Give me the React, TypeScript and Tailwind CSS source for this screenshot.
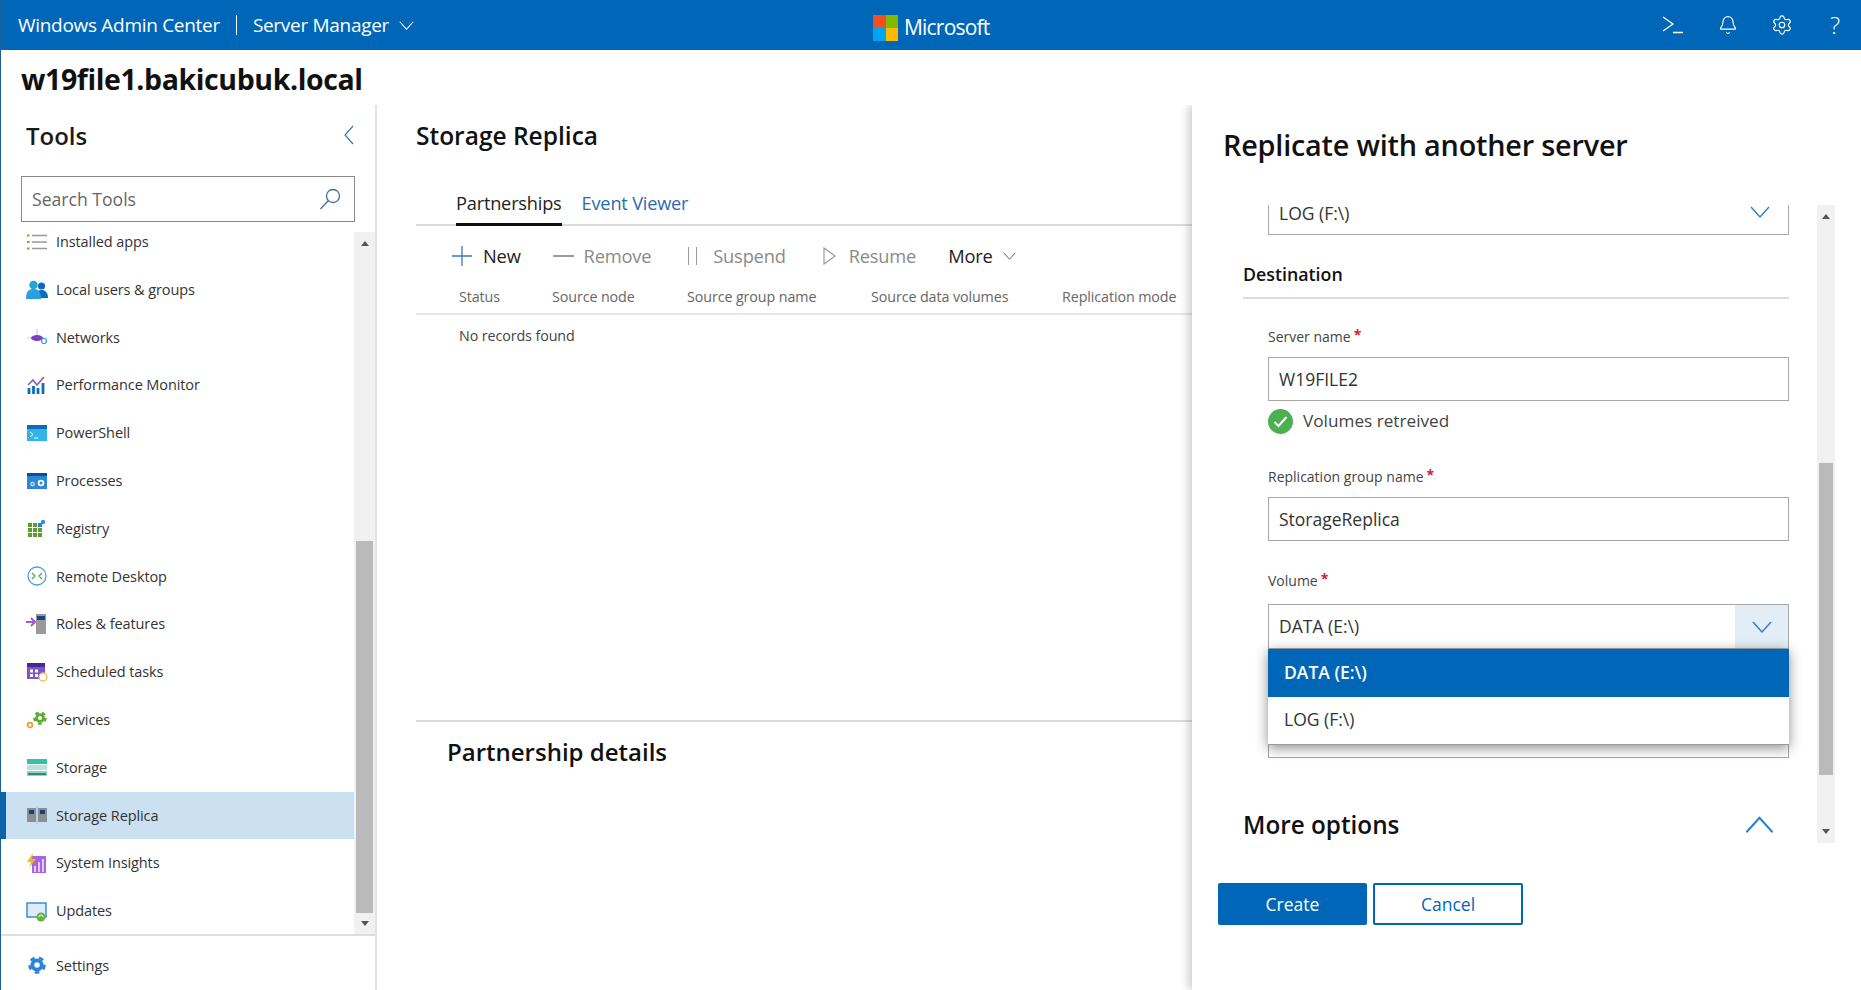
import { ReactNode } from "react"
import { Bell, Settings } from "lucide-react"

const Chevron = ({ className, up }: { className: string; up?: boolean }) => (
  <svg viewBox="0 0 20 12" className={className} fill="none" stroke="currentColor" strokeWidth="1.4">
    <path d={up ? "M1 11 10 1l9 10" : "M1 1l9 10 9-10"} />
  </svg>
)

const Gear = ({ color, r = 7, cx = 11, cy = 10 }: { color: string; r?: number; cx?: number; cy?: number }) => (
  <g fill="none" stroke={color}>
    <circle cx={cx} cy={cy} r={r} strokeWidth={2.6} strokeDasharray={`${r * 0.62} ${r * 0.62}`} />
    <circle cx={cx} cy={cy} r={r * 0.62} strokeWidth={r * 0.5} />
  </g>
)

const icons: Record<string, ReactNode> = {
  apps: (
    <>
      <path d="M1 3.500h2.500M1 10h2.500M1 16.500h2.500" stroke="#6fae3c" strokeWidth="2" />
      <path d="M6 3.500h15M6 10h15M6 16.500h15" stroke="#999" strokeWidth="1.400" />
    </>
  ),
  users: (
    <>
      <circle cx="15.500" cy="6" r="3.600" fill="#0f6cbd" />
      <path d="M10 18c0-7 3-8 5.500-8s6.500 1 6.500 8z" fill="#0f6cbd" />
      <circle cx="7.500" cy="5" r="4.200" fill="#2aa0dc" />
      <path d="M0 19c0-8 3-10 7.500-10S15 11 15 19z" fill="#2aa0dc" />
    </>
  ),
  networks: (
    <>
      <path d="M11 2v7" stroke="#c9b8ea" strokeWidth="1" />
      <path d="M1 11h20" stroke="#d7c9f2" strokeWidth="1" />
      <ellipse cx="11" cy="11" rx="6" ry="3" fill="#7b3fc4" />
      <circle cx="18" cy="14" r="2.500" fill="#fff" stroke="#3aa0dc" strokeWidth="1.2" />
    </>
  ),
  perf: (
    <>
      <path d="M3 19v-6M7.500 19v-8M12 19v-6M17 19V8" stroke="#0f6cbd" strokeWidth="2.800" />
      <path d="M2 10l5-5 4 5 7-8" fill="none" stroke="#8a5cc8" strokeWidth="1.600" />
    </>
  ),
  powershell: (
    <>
      <rect x="1" y="2" width="20" height="16" fill="#2fb5e8" />
      <rect x="1" y="2" width="20" height="4" fill="#0f6cbd" />
      <path d="M4 9l3 2.500-3 2.500M8 15h4" fill="none" stroke="#fff" strokeWidth="1" />
    </>
  ),
  processes: (
    <>
      <rect x="1" y="2" width="20" height="16" fill="#2e86d8" />
      <rect x="1" y="2" width="20" height="3" fill="#0d4f94" />
      <circle cx="6.500" cy="13" r="1.700" fill="none" stroke="#cfe6fa" strokeWidth="1.200" />
      <circle cx="15" cy="12" r="2.400" fill="none" stroke="#fff" strokeWidth="1.800" />
    </>
  ),
  registry: (
    <>
      <path d="M2 4h4v4H2zM7 4h4v4H7zM2 9h4v4H2zM7 9h4v4H7zM12 9h4v4h-4zM2 14h4v4H2zM7 14h4v4H7zM12 14h4v4h-4z" fill="#5b9e2e" />
      <path d="M12 4h4v4h-4z" fill="#2f7fc9" />
      <circle cx="17" cy="3" r="2.200" fill="#2f8fdc" />
    </>
  ),
  remote: (
    <>
      <circle cx="11" cy="10" r="9" fill="#fff" stroke="#4d9fdc" strokeWidth="1.300" />
      <path d="M6 7l3 3-3 3M16 7l-3 3 3 3" fill="none" stroke="#4fa35a" strokeWidth="1.200" />
    </>
  ),
  roles: (
    <>
      <rect x="10" y="0" width="10" height="20" fill="#9a9a9a" />
      <rect x="11" y="2" width="8" height="4" fill="#12497f" />
      <path d="M0 8h9M5 4l4 4-4 4" fill="none" stroke="#9a5bdc" strokeWidth="2" />
    </>
  ),
  tasks: (
    <>
      <rect x="1" y="1" width="18" height="16" fill="#7b55c9" />
      <rect x="1" y="1" width="18" height="4" fill="#47298f" />
      <path d="M4 7.500h3v3H4zM9 7.500h3v3H9zM4 12h3v3H4zM9 12h3v3H9z" fill="#fff" />
      <circle cx="17" cy="15" r="4" fill="#fff" stroke="#e7c048" strokeWidth="1.300" />
    </>
  ),
  services: (
    <>
      <Gear color="#5fae2e" r={5.500} cx={14} cy={8} />
      <circle cx="4" cy="15" r="2.400" fill="#fff" stroke="#eaa02a" strokeWidth="1.800" />
    </>
  ),
  storage: (
    <>
      <rect x="1" y="1" width="20" height="5" fill="#35c2a8" />
      <rect x="1" y="7" width="20" height="5" fill="#b8e3da" />
      <rect x="1" y="13" width="20" height="5" fill="#9ccfc3" />
      <rect x="2" y="15" width="18" height="2" fill="#2f8a80" />
    </>
  ),
  replica: (
    <>
      <rect x="1" y="3" width="9" height="14" fill="#8a8f96" />
      <rect x="12" y="3" width="9" height="14" fill="#8a8f96" />
      <rect x="3" y="5" width="5" height="4" fill="#17426f" />
      <rect x="14" y="5" width="5" height="4" fill="#17426f" />
      <path d="M11 1v18" stroke="#9cc2e2" strokeWidth="1" />
    </>
  ),
  insights: (
    <>
      <rect x="6" y="3" width="14" height="17" fill="#a566e0" />
      <path d="M9 19v-6M13 19V9M17 19V6" stroke="#e9d8fa" strokeWidth="1.800" />
      <path d="M7 0L1 9h4l-2 6 7-9H6z" fill="#f2b61f" />
    </>
  ),
  updates: (
    <>
      <rect x="1" y="2" width="19" height="14" fill="#dcecf8" stroke="#2f86d0" strokeWidth="1.400" />
      <circle cx="15" cy="16" r="4.500" fill="#66b53a" />
      <path d="M13 16a2 2 0 0 1 4 0" fill="none" stroke="#fff" strokeWidth="1" />
    </>
  ),
  settings: <Gear color="#2a84d8" r={7.500} cx={11} cy={9} />,
}

const tools = [
  { label: "Installed apps", icon: "apps" },
  { label: "Local users & groups", icon: "users" },
  { label: "Networks", icon: "networks" },
  { label: "Performance Monitor", icon: "perf" },
  { label: "PowerShell", icon: "powershell" },
  { label: "Processes", icon: "processes" },
  { label: "Registry", icon: "registry" },
  { label: "Remote Desktop", icon: "remote" },
  { label: "Roles & features", icon: "roles" },
  { label: "Scheduled tasks", icon: "tasks" },
  { label: "Services", icon: "services" },
  { label: "Storage", icon: "storage" },
  { label: "Storage Replica", icon: "replica", active: true },
  { label: "System Insights", icon: "insights" },
  { label: "Updates", icon: "updates" },
]

const ToolIcon = ({ name }: { name: string }) => (
  <svg viewBox="0 0 22 20" className="w-[22px] h-[20px] shrink-0 overflow-visible">
    {icons[name]}
  </svg>
)

const ScrollArrow = ({ down }: { down?: boolean }) => (
  <svg viewBox="0 0 8 5" className="w-[8px] h-[5px] text-[#555]" fill="currentColor">
    <path d={down ? "M0 0h8L4 5z" : "M4 0l4 5H0z"} />
  </svg>
)

const Label = ({ text }: { text: string }) => (
  <div className="ml-[25px] flex h-[20px] items-center text-[14px] text-[#444]">
    {text}
    <span className="ml-[3px] -mt-[4px] text-[#d9173a] font-bold">*</span>
  </div>
)

const Field = ({ value, className }: { value: string; className: string }) => (
  <div className={`ml-[25px] h-[44px] flex items-center px-[10px] pt-[1px] border-[1.5px] border-[#a6a6a6] text-[17.5px] text-[#333] ${className}`}>
    {value}
  </div>
)

export default function App() {
  return (
    <div className="w-[1861px] h-[990px] overflow-hidden flex flex-col bg-white border-l border-[#1d5f96] font-['Open_Sans',sans-serif] text-[#1a1a1a]">
      {/* top bar */}
      <header className="h-[50px] shrink-0 bg-[#0067b8] text-white flex items-center relative">
        <span className="ml-[17px] text-[19px] font-medium tracking-[-0.3px]">Windows Admin Center</span>
        <span className="ml-[16px] w-px h-[20px] bg-white" />
        <span className="ml-[16px] text-[19px] font-medium tracking-[-0.3px]">Server Manager</span>
        <Chevron className="ml-[10px] w-[15px] h-[9px]" />
        <div className="absolute left-[872px] top-[12px] flex items-center">
          <div className="grid grid-cols-2 w-[25px] h-[26px]">
            <span className="bg-[#f25022]" />
            <span className="bg-[#7fba00]" />
            <span className="bg-[#00a4ef]" />
            <span className="bg-[#ffb900]" />
          </div>
          <span className="ml-[6px] text-[21px] font-medium tracking-[-0.8px]">Microsoft</span>
        </div>
        <div className="ml-auto flex items-center">
          <svg viewBox="0 0 22 18" className="w-[22px] h-[18px] mr-[34px]" fill="none" stroke="currentColor" strokeWidth="1.3">
            <path d="M1 1l10 7-10 7M11 16.500h10" />
          </svg>
          <Bell className="w-[20px] h-[20px] mr-[33px]" strokeWidth={1.4} />
          <Settings className="w-[22px] h-[22px] mr-[37px]" strokeWidth={1.3} />
          <span className="mr-[21px] text-[24px] font-light">?</span>
        </div>
      </header>

      <div className="h-[55px] shrink-0 flex items-center pl-[20px] pt-[3px] text-[28.5px] font-bold tracking-[-0.4px] text-[#111]">
        w19file1.bakicubuk.local
      </div>

      <div className="flex-1 min-h-0 flex">
        {/* tools sidebar */}
        <aside className="w-[376px] shrink-0 border-r-2 border-[#e3e3e3] flex flex-col">
          <div className="h-[71px] shrink-0 flex items-start justify-between pt-[14px] pl-[25px] pr-[21px]">
            <h2 className="text-[24px] font-semibold leading-[34px]">Tools</h2>
            <svg viewBox="0 0 10 20" className="mt-[6px] w-[10px] h-[20px] text-[#3b78b8]" fill="none" stroke="currentColor" strokeWidth="1.2">
              <path d="M9 1L1 10l8 9" />
            </svg>
          </div>
          <div className="ml-[20px] w-[334px] h-[46px] shrink-0 border-[1.5px] border-[#8a8a8a] flex items-center justify-between pl-[10px] pr-[13px] text-[17.6px] text-[#666]">
            Search Tools
            <svg viewBox="0 0 22 22" className="w-[22px] h-[22px] text-[#3f6f9f]" fill="none" stroke="currentColor" strokeWidth="1.3">
              <circle cx="14" cy="8" r="6.500" />
              <path d="M9.500 12.500 1.500 21" />
            </svg>
          </div>
          <div className="flex-1 min-h-0 flex">
            <nav className="w-[353px] overflow-hidden">
              <div className="-mt-[4px]">
                {tools.map((t) => (
                  <div
                    key={t.label}
                    className={`h-[47.8px] flex items-center gap-[8px] pl-[25px] text-[14.5px] tracking-[-0.1px] text-[#333] ${
                      t.active ? "bg-[#cbe0f1] border-l-[5px] border-[#0067b8] !pl-[20px]" : ""
                    }`}
                  >
                    <ToolIcon name={t.icon} />
                    {t.label}
                  </div>
                ))}
              </div>
            </nav>
            <div className="mt-[10px] w-[21px] bg-[#f1f1f1] flex flex-col items-center">
              <div className="h-[22px] shrink-0 flex items-center">
                <ScrollArrow />
              </div>
              <div className="mt-[287px] h-[372px] w-[17px] shrink-0 bg-[#bababa]" />
              <div className="flex-1 flex items-center">
                <ScrollArrow down />
              </div>
            </div>
          </div>
          <div className="h-[56px] shrink-0 border-t-2 border-[#dedede] flex items-center gap-[8px] pl-[25px] pt-[6px] text-[14.5px] tracking-[-0.1px] text-[#333]">
            <ToolIcon name="settings" />
            Settings
          </div>
        </aside>

        {/* main */}
        <main className="flex-1 min-w-0 pl-[39px] flex flex-col">
          <h1 className="mt-[14px] h-[36px] text-[24.5px] font-semibold leading-[34px] text-[#111]">Storage Replica</h1>
          <div className="mt-[29px] h-[42px] border-b-2 border-[#dcdcdc] flex items-start gap-[20px] pl-[40px] pt-[5px] text-[18.2px] tracking-[-0.2px]">
            <span className="h-[37px] border-b-[3px] border-[#111] leading-[28px] text-[#222]">Partnerships</span>
            <span className="leading-[28px] text-[#2b6cb0]">Event Viewer</span>
          </div>
          <div className="h-[56px] pt-[4px] flex items-center pl-[36px] text-[18.3px] font-medium tracking-[-0.2px] text-[#8a8a8a]">
            <svg viewBox="0 0 20 20" className="w-[20px] h-[20px] text-[#3b78b8]" fill="none" stroke="currentColor" strokeWidth="1.300">
              <path d="M10 0v20M0 10h20" />
            </svg>
            <span className="ml-[11px] text-[#222]">New</span>
            <span className="ml-[32px] w-[21px] h-[2px] bg-[#9a9a9a]" />
            <span className="ml-[10px]">Remove</span>
            <span className="ml-[37px] w-[9px] h-[18px] border-x-[1.5px] border-[#9a9a9a]" />
            <span className="ml-[16px]">Suspend</span>
            <svg viewBox="0 0 13 18" className="ml-[37px] w-[13px] h-[18px]" fill="none" stroke="#9a9a9a" strokeWidth="1.2">
              <path d="M1 1l11 8-11 8z" />
            </svg>
            <span className="ml-[13px]">Resume</span>
            <span className="ml-[32px] text-[#222]">More</span>
            <Chevron className="ml-[10px] w-[13px] h-[8px] text-[#555]" />
          </div>
          <div className="h-[33px] pb-[2px] border-b-2 border-[#e6e6e6] flex items-center text-[14.3px] tracking-[-0.1px] text-[#666]">
            <span className="ml-[43px] w-[93px]">Status</span>
            <span className="w-[135px]">Source node</span>
            <span className="w-[184px]">Source group name</span>
            <span className="w-[191px]">Source data volumes</span>
            <span>Replication mode</span>
          </div>
          <div className="mt-[11px] h-[20px] pl-[43px] text-[14.3px] leading-[20px] tracking-[-0.1px] text-[#444]">No records found</div>
          <div className="mt-[374px] border-t-2 border-[#dcdcdc] pl-[31px] pt-[13px] text-[24px] font-semibold leading-[34px] text-[#111]">
            Partnership details
          </div>
        </main>

        {/* replicate panel */}
        <section className="w-[669px] shrink-0 bg-white shadow-[-4px_0_8px_rgba(0,0,0,0.18)] [clip-path:inset(0_0_0_-20px)] flex flex-col">
          <h2 className="ml-[31px] mt-[20px] h-[40px] text-[28.8px] font-semibold leading-[40px] tracking-[-0.2px] text-[#111]">
            Replicate with another server
          </h2>
          <div className="mt-[32px] h-[646px] flex">
            <div className="w-[625px] pt-[8px] pl-[51px] pr-[28px] overflow-hidden">
              <div className="ml-[25px] h-[30px] flex items-start justify-between pl-[10px] pr-[18px] border-x-[1.5px] border-b-[1.5px] border-[#a6a6a6] text-[17.5px] leading-[16px] text-[#333]">
                LOG (F:\)
                <Chevron className="mt-[1px] w-[20px] h-[12px] text-[#2f7fc9]" />
              </div>
              <div className="mt-[24px] pb-[8px] border-b-2 border-[#dcdcdc] text-[17.8px] font-semibold leading-[30px] text-[#111]">Destination</div>
              <div className="mt-[27px]" />
              <Label text="Server name" />
              <Field value="W19FILE2" className="mt-[11px]" />
              <div className="ml-[25px] mt-[8px] h-[24px] flex items-center gap-[10px] text-[17.2px] text-[#444]">
                <svg viewBox="0 0 25 25" className="w-[25px] h-[25px]">
                  <circle cx="12.500" cy="12.500" r="12.500" fill="#4caf50" />
                  <path d="M6.500 13l4 4 8-9" fill="none" stroke="#fff" strokeWidth="2" />
                </svg>
                Volumes retreived
              </div>
              <div className="mt-[33px]" />
              <Label text="Replication group name" />
              <Field value="StorageReplica" className="mt-[11px]" />
              <div className="mt-[29px]" />
              <Label text="Volume" />
              <div className="relative mt-[14px]">
                <div className="ml-[25px] h-[45px] flex items-center justify-between pl-[10px] border-[1.5px] border-[#a6a6a6] text-[17.5px] text-[#333]">
                  DATA (E:\)
                  <div className="w-[53px] h-full bg-[#e2edf6] flex items-center justify-center">
                    <Chevron className="w-[20px] h-[12px] text-[#2f7fc9]" />
                  </div>
                </div>
                <div className="absolute z-10 top-full left-[25px] right-0 bg-white shadow-[0_3px_12px_rgba(0,0,0,0.45)] border-b border-[#9a9a9a] text-[17.5px]">
                  <div className="h-[48px] pb-[2px] flex items-center pl-[16px] bg-[#0067b8] text-white font-semibold">DATA (E:\)</div>
                  <div className="h-[47px] pb-[2px] flex items-center pl-[16px] text-[#333]">LOG (F:\)</div>
                </div>
              </div>
              <div className="ml-[25px] mt-[79px] h-[30px] border-x-[1.5px] border-b-[1.5px] border-[#a6a6a6]" />
              <div className="mt-[52px] h-[30px] flex items-center justify-between pr-[15px] text-[24.3px] font-semibold text-[#111]">
                More options
                <Chevron up className="w-[29px] h-[18px] text-[#2f7fc9]" />
              </div>
            </div>
            <div className="mt-[8px] w-[18px] bg-[#f1f1f1] flex flex-col items-center">
              <div className="h-[22px] shrink-0 flex items-center">
                <ScrollArrow />
              </div>
              <div className="mt-[236px] h-[312px] w-[14px] shrink-0 bg-[#bababa]" />
              <div className="flex-1 flex items-end pb-[9px]">
                <ScrollArrow down />
              </div>
            </div>
          </div>
          <div className="mt-[40px] ml-[26px] flex gap-[6px] text-[17.5px] font-medium">
            <button className="w-[149px] h-[42px] rounded-[2px] bg-[#0067b8] text-white">Create</button>
            <button className="w-[150px] h-[42px] rounded-[2px] border-2 border-[#0067b8] text-[#0067b8]">Cancel</button>
          </div>
        </section>
      </div>
    </div>
  )
}
